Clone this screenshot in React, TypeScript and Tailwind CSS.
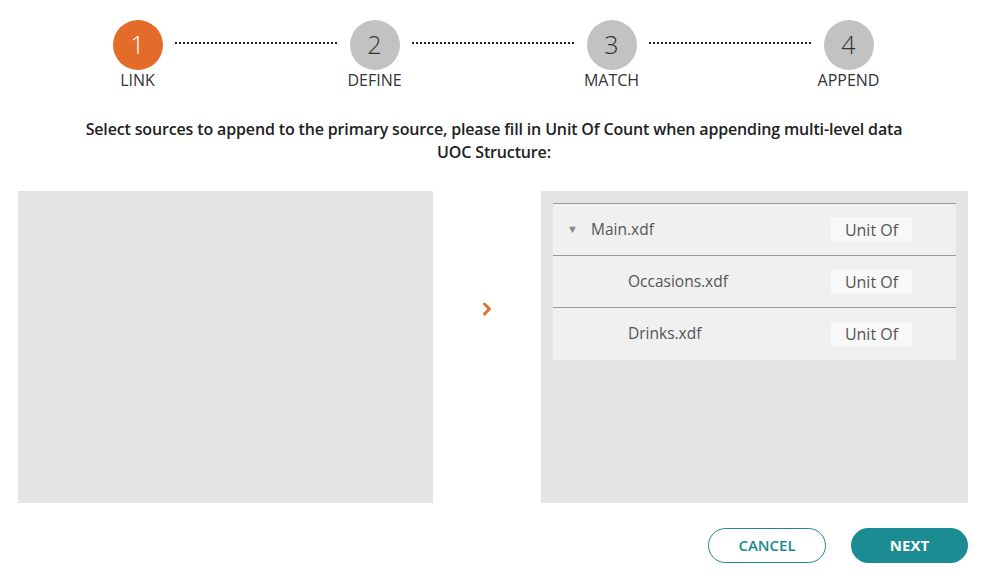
import { ChevronRight } from "lucide-react";

const steps = [
  { n: 1, label: "LINK", active: true },
  { n: 2, label: "DEFINE", active: false },
  { n: 3, label: "MATCH", active: false },
  { n: 4, label: "APPEND", active: false },
];

const rows = [
  { name: "Main.xdf", root: true },
  { name: "Occasions.xdf", root: false },
  { name: "Drinks.xdf", root: false },
];

function Stepper() {
  return (
    <div className="flex items-start justify-center pt-5 pr-[2px]">
      {steps.map((s, i) => (
        <div key={s.n} className="flex items-start">
          {i > 0 && (
            <div className="mx-[12.5px] mt-[22px] w-[162px] border-t-2 border-dotted border-[#222]" />
          )}
          <div className="flex w-[50px] flex-col items-center">
            <div
              className={
                s.active
                  ? "flex h-[50px] w-[50px] items-center justify-center rounded-full bg-[#e36c2a] text-[25px] font-light text-white"
                  : "flex h-[50px] w-[50px] items-center justify-center rounded-full bg-[#c2c2c2] text-[25px] font-light text-[#333]"
              }
            >
              {s.n}
            </div>
            <div className="whitespace-nowrap text-[16px] leading-5 text-[#333]">
              {s.label}
            </div>
          </div>
        </div>
      ))}
    </div>
  );
}

export default function App() {
  return (
    <div
      className="flex h-[583px] w-[988px] flex-col bg-white"
      style={{ fontFamily: '"Open Sans", "Noto Sans", sans-serif' }}
    >
      <Stepper />

      {/* Instructions */}
      <div className="mt-[28px] text-center text-[16px] font-semibold leading-[23px] tracking-[-0.15px] text-[#222]">
        <p>
          Select sources to append to the primary source, please fill in Unit Of Count when
          appending multi-level data
        </p>
        <p>UOC Structure:</p>
      </div>

      {/* Panels */}
      <div className="mt-[27px] flex pl-[18px] pr-[20px]">
        <div className="h-[312px] w-[415px] bg-[#e4e4e4]" />
        <div className="flex w-[108px] items-start justify-center pt-[108px]">
          <ChevronRight className="h-[20px] w-[20px] text-[#e36c2a]" strokeWidth={3.5} />
        </div>
        <div className="h-[312px] flex-1 bg-[#e4e4e4] px-[12px] pt-[12px]">
          <div className="border-t border-[#999]">
            {rows.map((r, i) => (
              <div
                key={r.name}
                className={
                  i < rows.length - 1
                    ? "flex h-[52px] items-center border-b border-[#999] bg-[#f0f0f0]"
                    : "flex h-[52px] items-center bg-[#f0f0f0]"
                }
              >
                <div className="flex flex-1 items-center">
                  {r.root ? (
                    <>
                      <span className="ml-[14px] w-[24px] text-[11px] text-[#888]">▼</span>
                      <span className="text-[15.5px] text-[#555]">{r.name}</span>
                    </>
                  ) : (
                    <span className="ml-[75px] text-[15.5px] text-[#555]">{r.name}</span>
                  )}
                </div>
                <div className="mr-[44px] flex h-[25px] w-[81px] items-center justify-center bg-[#f8f8f8] text-[16px] text-[#555]">
                  Unit Of
                </div>
              </div>
            ))}
          </div>
        </div>
      </div>

      {/* Footer buttons */}
      <div className="mt-[25px] flex justify-end gap-[25px] pr-[20px]">
        <button className="h-[35px] w-[118px] rounded-full border border-[#1b8a8f] bg-white text-[15px] font-semibold text-[#1b8a8f]">
          CANCEL
        </button>
        <button className="h-[35px] w-[117px] rounded-full bg-[#1b8c91] text-[15px] font-bold text-white">
          NEXT
        </button>
      </div>
    </div>
  );
}
